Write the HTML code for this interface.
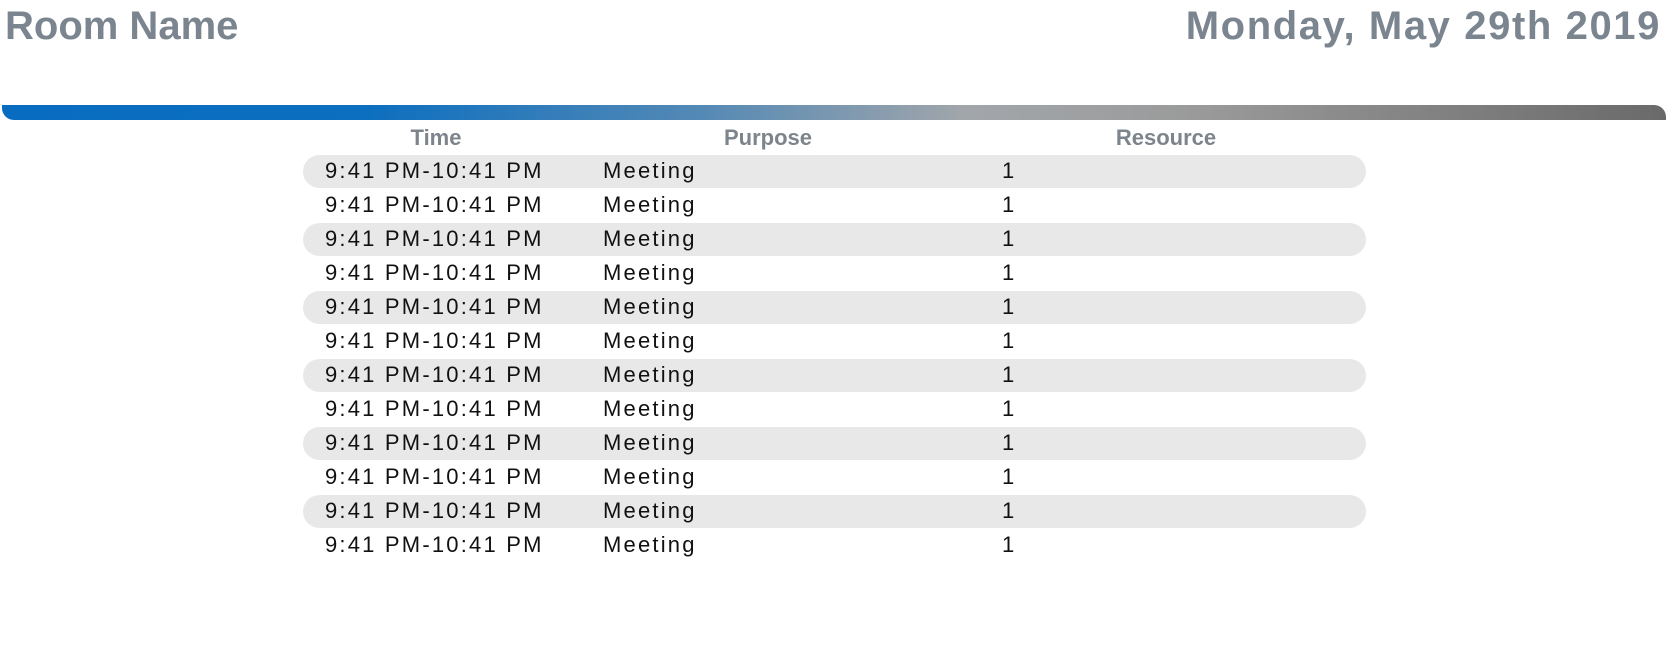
<!DOCTYPE html>
<html><head><meta charset="utf-8"><style>
body{margin:0;width:1672px;height:652px;background:#fff;position:relative;overflow:hidden;font-family:"Liberation Sans","DejaVu Sans",sans-serif;}
.t{position:absolute;top:3px;font-weight:bold;font-size:40px;color:#7b858f;line-height:46px;white-space:nowrap}
#room{left:5px}
#date{right:11px;letter-spacing:1.6px}
#bar{position:absolute;left:2px;top:105px;width:1664px;height:15px;border-radius:0 12px 0 12px;
background:linear-gradient(90deg,#086cc0 0%,#0d6fbf 22%,#5489b5 42%,#a2a6aa 58%,#9a9a9a 72%,#6a6a6a 100%);}
.h{position:absolute;top:125px;font-size:22px;font-weight:bold;color:#7d848c;transform:translateX(-50%);line-height:26px}
.row{position:absolute;left:303px;width:1063px;height:33px;border-radius:17px;font-size:22px;letter-spacing:2.2px;color:#111;line-height:31px}
.row.g{background:#e8e8e8}
.row span{position:absolute;top:0}
.a{left:22px}.b{left:300px}.c{left:699px}
</style></head><body>
<div class="t" id="room">Room Name</div>
<div class="t" id="date">Monday, May 29th 2019</div>
<div id="bar"></div>
<div class="h" style="left:436px">Time</div>
<div class="h" style="left:768px">Purpose</div>
<div class="h" style="left:1166px">Resource</div>
<div class="row g" style="top:155px"><span class="a">9:41 PM-10:41 PM</span><span class="b">Meeting</span><span class="c">1</span></div>
<div class="row" style="top:189px"><span class="a">9:41 PM-10:41 PM</span><span class="b">Meeting</span><span class="c">1</span></div>
<div class="row g" style="top:223px"><span class="a">9:41 PM-10:41 PM</span><span class="b">Meeting</span><span class="c">1</span></div>
<div class="row" style="top:257px"><span class="a">9:41 PM-10:41 PM</span><span class="b">Meeting</span><span class="c">1</span></div>
<div class="row g" style="top:291px"><span class="a">9:41 PM-10:41 PM</span><span class="b">Meeting</span><span class="c">1</span></div>
<div class="row" style="top:325px"><span class="a">9:41 PM-10:41 PM</span><span class="b">Meeting</span><span class="c">1</span></div>
<div class="row g" style="top:359px"><span class="a">9:41 PM-10:41 PM</span><span class="b">Meeting</span><span class="c">1</span></div>
<div class="row" style="top:393px"><span class="a">9:41 PM-10:41 PM</span><span class="b">Meeting</span><span class="c">1</span></div>
<div class="row g" style="top:427px"><span class="a">9:41 PM-10:41 PM</span><span class="b">Meeting</span><span class="c">1</span></div>
<div class="row" style="top:461px"><span class="a">9:41 PM-10:41 PM</span><span class="b">Meeting</span><span class="c">1</span></div>
<div class="row g" style="top:495px"><span class="a">9:41 PM-10:41 PM</span><span class="b">Meeting</span><span class="c">1</span></div>
<div class="row" style="top:529px"><span class="a">9:41 PM-10:41 PM</span><span class="b">Meeting</span><span class="c">1</span></div>
</body></html>
